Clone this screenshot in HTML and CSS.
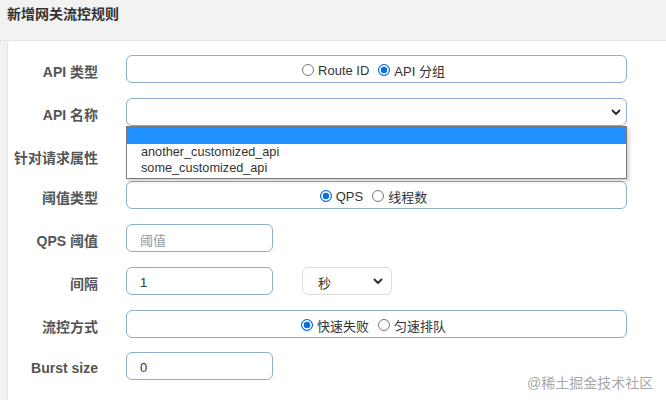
FILE: index.html
```html
<!DOCTYPE html>
<html lang="zh">
<head>
<meta charset="utf-8">
<link rel="stylesheet" href="styles.css">
</head>
<body>
<div class="page">
  <div class="head">新增网关流控规则</div>
  <div class="card">
    <div class="row">
      <div class="label">API 类型</div>
      <div class="box wide radios">
        <label class="opt"><span class="radio"></span>Route ID</label>
        <label class="opt"><span class="radio on"></span>API 分组</label>
      </div>
    </div>
    <div class="row">
      <div class="label">API 名称</div>
      <div class="box wide select">
        <span class="val"></span>
        <svg class="chev" width="10" height="7" viewBox="0 0 10 7"><path d="M1.5 1.5 L5 5 L8.5 1.5" fill="none" stroke="#333" stroke-width="2" stroke-linecap="round" stroke-linejoin="round"/></svg>
        <ul class="menu">
          <li class="sel">&nbsp;</li>
          <li>another_customized_api</li>
          <li>some_customized_api</li>
        </ul>
      </div>
    </div>
    <div class="row r3">
      <div class="label">针对请求属性</div>
      <div class="ctl"></div>
    </div>
    <div class="row">
      <div class="label">阈值类型</div>
      <div class="box wide radios">
        <label class="opt"><span class="radio on"></span>QPS</label>
        <label class="opt"><span class="radio"></span>线程数</label>
      </div>
    </div>
    <div class="row">
      <div class="label">QPS 阈值</div>
      <div class="box small"><span class="ph">阈值</span></div>
    </div>
    <div class="row">
      <div class="label">间隔</div>
      <div class="box small"><span class="txt">1</span></div>
      <div class="box unit select">
        <span class="txt">秒</span>
        <svg class="chev" width="10" height="7" viewBox="0 0 10 7"><path d="M1.5 1.5 L5 5 L8.5 1.5" fill="none" stroke="#333" stroke-width="2" stroke-linecap="round" stroke-linejoin="round"/></svg>
      </div>
    </div>
    <div class="row">
      <div class="label">流控方式</div>
      <div class="box wide radios">
        <label class="opt"><span class="radio on"></span>快速失败</label>
        <label class="opt"><span class="radio"></span>匀速排队</label>
      </div>
    </div>
    <div class="row r8">
      <div class="label">Burst size</div>
      <div class="box small"><span class="txt">0</span></div>
    </div>
  </div>
  <div class="mark">@稀土掘金技术社区</div>
</div>
</body>
</html>
```
FILE: styles.css
```css
html, body {
  margin: 0;
  padding: 0;
  background: #f2f2f2;
  overflow: hidden;
}
body {
  font-family: "Liberation Sans", "Noto Sans CJK SC", sans-serif;
  color: #333;
}
.page {
  position: relative;
  width: 666px;
  height: 400px;
  overflow: hidden;
}
.head {
  height: 41px;
  box-sizing: border-box;
  padding: 3px 0 0 7px;
  font-size: 14px;
  font-weight: bold;
  color: #333;
  border-bottom: 1px solid #e4e4e4;
}
.card {
  margin-left: 7px;
  width: 680px;
  height: 400px;
  background: #fff;
  border-left: 1px solid #e6e6e6;
  border-top-left-radius: 4px;
  padding-top: 14px;
  box-sizing: border-box;
}
.row {
  display: flex;
  align-items: center;
  height: 28px;
  margin-bottom: 15px;
}
.r3 {
  height: 25px;
}
.r3 .label { padding-top: 6px; }
.row.r8 { margin-top: -1px; }
.label {
  width: 90px;
  margin-right: 28px;
  padding-top: 4px;
  text-align: right;
  font-size: 14px;
  font-weight: bold;
  color: #555;
  white-space: nowrap;
}
.box {
  height: 28px;
  box-sizing: border-box;
  border: 1px solid #8eaecb;
  border-radius: 6px;
  background: #fff;
  display: flex;
  align-items: center;
  font-size: 13px;
  position: relative;
  padding-top: 3px;
}
.wide { width: 501px; }
.small { width: 147px; padding-left: 13px; }
.unit {
  width: 90px;
  margin-left: 29px;
  border-color: #dcdcdc;
  padding-left: 15px;
}
.radios {
  justify-content: center;
  gap: 9px;
  padding-right: 6px;
}
.opt {
  display: flex;
  align-items: center;
  color: #333;
  font-size: 13px;
}
.radio {
  width: 12px;
  height: 12px;
  border: 1px solid #767676;
  border-radius: 50%;
  margin-right: 4px;
  margin-top: -1px;
  box-sizing: border-box;
  display: inline-block;
}
.radio.on {
  border: 1px solid #0a6fe0;
  background: #0a6fe0;
  box-shadow: inset 0 0 0 1.8px #fff;
}
.ph { color: #999; }
.txt { color: #333; }
.select .chev {
  position: absolute;
  right: 5px;
  top: 10px;
}
.unit .chev { right: 8px; }
.menu {
  position: absolute;
  left: -1px;
  top: 27px;
  width: 501px;
  margin: 0;
  padding: 0 0 2px 0;
  list-style: none;
  background: #fff;
  border: 1px solid #7a7a7a;
  box-sizing: border-box;
  box-shadow: 2px 2px 4px rgba(0,0,0,0.2);
  z-index: 5;
}
.menu li {
  height: 16px;
  line-height: 16px;
  padding-left: 14px;
  font-size: 12.7px;
  color: #333;
  white-space: nowrap;
}
.menu li.sel {
  background: #1e90ff;
  height: 17px;
}
.mark {
  position: absolute;
  left: 527px;
  top: 372px;
  font-size: 14px;
  color: #a8a8a8;
}
```
